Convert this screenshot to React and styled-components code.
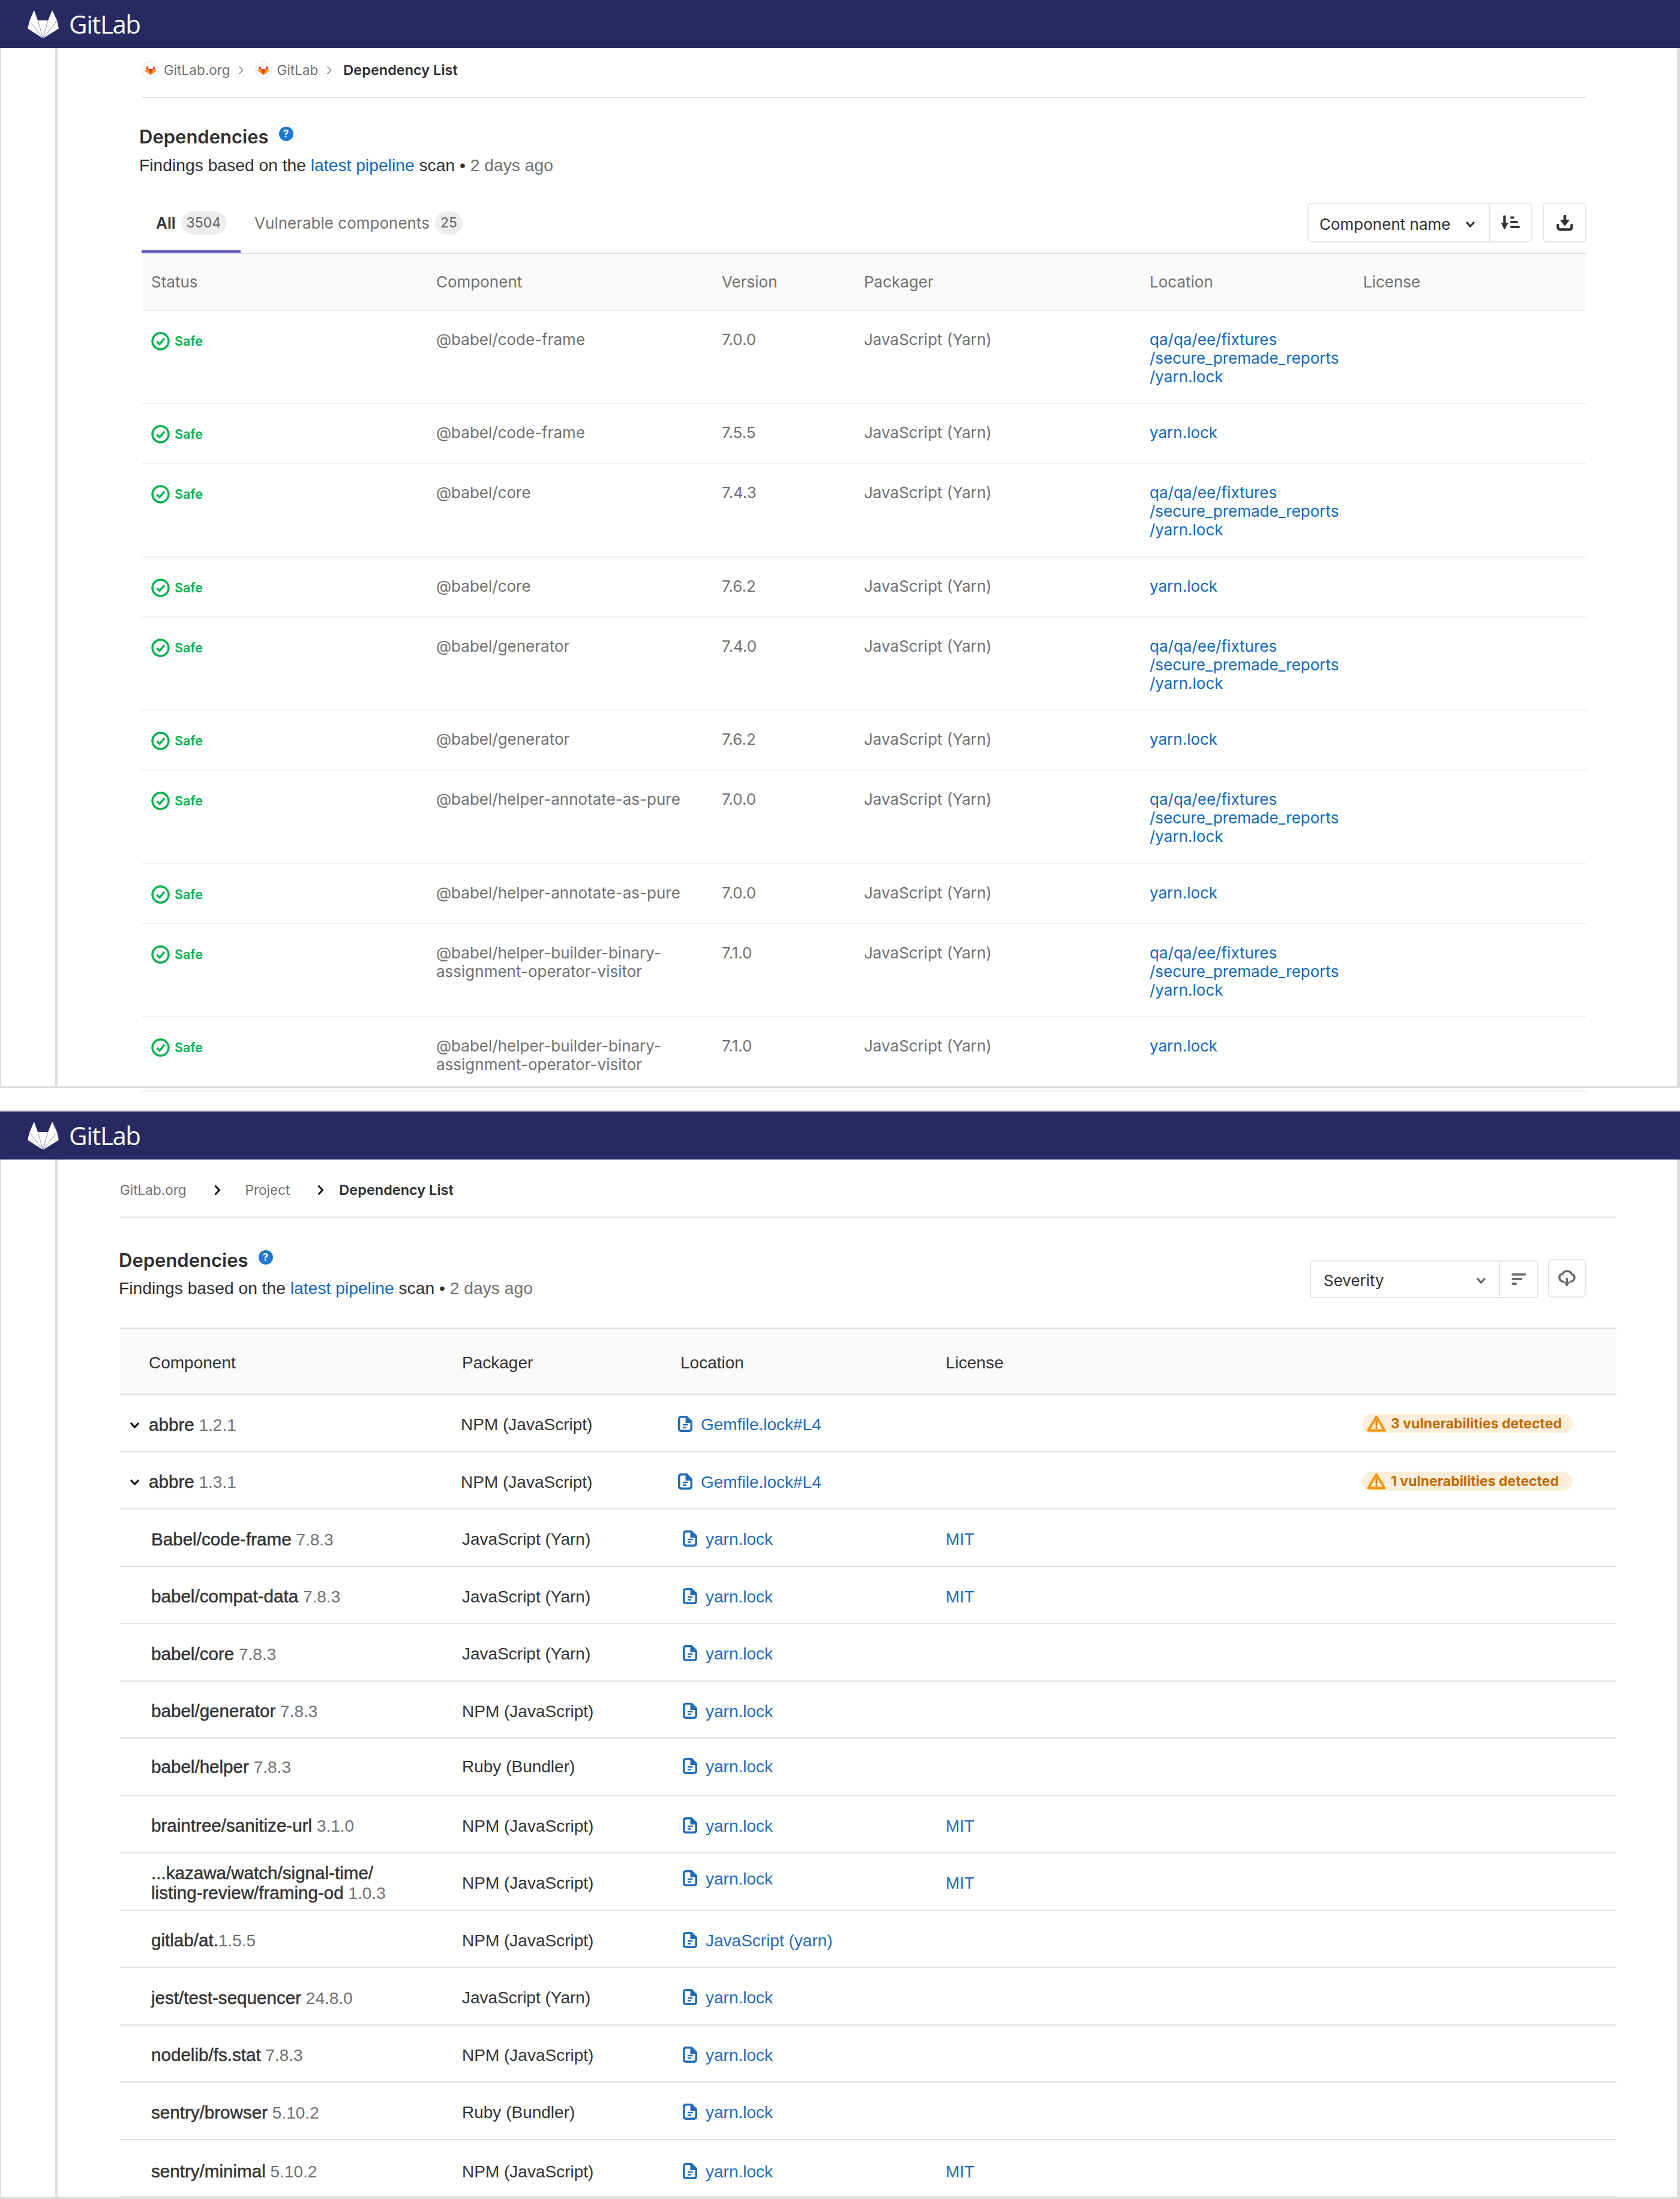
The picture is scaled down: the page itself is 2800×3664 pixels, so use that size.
import React from 'react';
import styled, { createGlobalStyle } from 'styled-components';

const INTER = '"Inter", "Liberation Sans", sans-serif';
const HELV = '"Liberation Sans", Arial, sans-serif';
const LINK = '#1168b8';

const GlobalStyle = createGlobalStyle`
  html, body {
    margin: 0;
    padding: 0;
    background: #fff;
    font-family: ${INTER};
  }
  * { box-sizing: border-box; }
`;

const Page = styled.div`
  width: 2800px;
  height: 3664px;
  overflow: hidden;
  background: #fff;
`;

const Panel = styled.section`
  display: flex;
  flex-direction: column;
  height: ${p => p.$height}px;
  margin-top: ${p => p.$top || 0}px;
  border-top: ${p => (p.$top ? '2px solid #ddd' : 'none')};
`;

const Navbar = styled.header`
  flex: 0 0 80px;
  display: flex;
  align-items: center;
  padding-left: 46px;
  background: #292961;
`;

const Wordmark = styled.span`
  margin-left: 17px;
  font-family: "Open Sans", sans-serif;
  font-size: 42px;
  line-height: 48px;
  letter-spacing: -1.4px;
  color: #fff;
`;

const Body = styled.div`
  flex: 1;
  min-height: 0;
  display: flex;
  border-left: 2px solid #ddd;
  border-right: 5px solid #ddd;
  border-bottom: ${p => p.$bottom}px solid #ddd;
`;

const Sidebar = styled.aside`
  flex: 0 0 94px;
  border-right: 4px solid #ddd;
`;

const Content = styled.main`
  flex: 1;
  min-width: 0;
  padding-left: ${p => p.$left}px;
  padding-right: ${p => p.$right}px;
`;

const Breadcrumbs = styled.nav`
  display: flex;
  align-items: center;
  height: ${p => p.$height}px;
  padding-top: ${p => p.$offset || 0}px;
  padding-bottom: ${p => p.$lift || 0}px;
  border-bottom: 2px solid #e5e5e5;
  font-size: 22.5px;
  color: #707070;
`;

const Avatar = styled.span`
  display: inline-flex;
  align-items: center;
  justify-content: center;
  width: 29px;
  height: 29px;
  margin-right: 8px;
  border: 2px solid #eee;
  border-radius: 50%;
`;

const Crumb = styled.span`
  font-size: ${p => (p.$current ? 23.5 : 22.5)}px;
  font-weight: ${p => (p.$current ? 600 : 400)};
  color: ${p => (p.$current ? '#2e2e2e' : '#707070')};
`;

const CrumbArrow = styled.span`
  display: inline-flex;
  margin: 0 ${p => p.$after}px 0 ${p => p.$before}px;
`;

const Title = styled.h1`
  display: flex;
  align-items: center;
  height: 40px;
  margin: ${p => p.$top}px 0 0 ${p => p.$hang}px;
  font-size: 31px;
  font-weight: 600;
  color: #2e2e2e;
`;

const HelpBadge = styled.span`
  display: inline-flex;
  align-items: center;
  justify-content: center;
  width: 24px;
  height: 24px;
  margin: -8px 0 0 17px;
  border-radius: 50%;
  background: #1f78d1;
  font-size: 17px;
  font-weight: 700;
  color: #fff;
`;

const Subtitle = styled.p`
  margin: ${p => p.$top}px 0 0 ${p => p.$hang}px;
  font-family: ${HELV};
  font-size: 28.25px;
  line-height: 36px;
  color: #2e2e2e;
`;

const SubLink = styled.a`
  color: ${LINK};
`;

const Muted = styled.span`
  color: #707070;
`;

const TabBar = styled.div`
  display: flex;
  justify-content: space-between;
  height: 85px;
  margin-top: 45px;
  border-bottom: 2px solid #ddd;
`;

const Tabs = styled.div`
  display: flex;
  align-items: flex-end;
`;

const Tab = styled.div`
  display: flex;
  align-items: flex-start;
  gap: 9px;
  height: 69px;
  padding: 0 ${p => (p.$active ? 24 : 0)}px 0 ${p => (p.$active ? 24 : 23)}px;
  border-bottom: 4px solid ${p => (p.$active ? '#6056c5' : 'transparent')};
  font-size: 26px;
  line-height: 39px;
  font-weight: ${p => (p.$active ? 600 : 400)};
  color: ${p => (p.$active ? '#2e2e2e' : '#707070')};
`;

const TabCount = styled.span`
  padding: 0 9px;
  border-radius: 20px;
  background: #eee;
  font-size: 23px;
  font-weight: 400;
  color: #5e5e5e;
`;

const Toolbar = styled.div`
  display: flex;
  align-items: flex-start;
  gap: ${p => p.$gap}px;
  margin-top: ${p => p.$top || 0}px;
  margin-right: ${p => p.$right || 0}px;
`;

const SortGroup = styled.div`
  display: flex;
  width: ${p => p.$width}px;
  height: ${p => p.$height}px;
  margin-top: ${p => p.$top || 0}px;
  border: 2px solid #e5e5e5;
  border-radius: 6px;
`;

const SortSelect = styled.div`
  flex: 1;
  display: flex;
  align-items: center;
  justify-content: space-between;
  padding: 4px ${p => p.$pad}px 0 ${p => p.$lead}px;
  border-right: 2px solid #e5e5e5;
  font-size: ${p => p.$size}px;
  color: #2e2e2e;
`;

const SortButton = styled.div`
  flex: 0 0 ${p => p.$width}px;
  display: flex;
  align-items: center;
  justify-content: center;
`;

const IconButton = styled.div`
  display: flex;
  align-items: center;
  justify-content: center;
  width: ${p => p.$width}px;
  height: ${p => p.$height}px;
  border: 2px solid #e5e5e5;
  border-radius: 6px;
`;

const TableHead = styled.div`
  display: grid;
  grid-template-columns: 475px 476px 237px 476px 356px 1fr;
  align-items: center;
  height: 95px;
  padding: 0 0 0 16px;
  background: #fafafa;
  border-bottom: 2px solid #eee;
  font-size: 26px;
  color: #707070;
`;

const SafeRow = styled.div`
  display: grid;
  grid-template-columns: 475px 476px 237px 476px 356px 1fr;
  align-items: start;
  min-height: 100px;
  padding: 32px 0 28.4px 16px;
  border-bottom: 2px solid #f0f0f0;
  font-size: 26px;
  line-height: 31px;
  color: #707070;
`;

const Safe = styled.div`
  display: flex;
  align-items: center;
  gap: 8px;
  margin-top: 3px;
  font-size: 21.5px;
  font-weight: 600;
  color: #05b14c;
`;

const BlueLink = styled.a`
  color: ${LINK};
`;

const ListHead = styled.div`
  display: grid;
  grid-template-columns: 570px 364px 442px 1fr;
  align-items: center;
  height: 112px;
  margin-top: 48px;
  padding-top: 6px;
  background: #fafafa;
  border-top: 2px solid #ddd;
  border-bottom: 2px solid #ddd;
  font-family: ${HELV};
  font-size: 28px;
  color: #333;
`;

const HeadName = styled.span`
  padding-left: 48px;
`;

const HeadRow = styled.div`
  display: flex;
  justify-content: space-between;
  align-items: flex-start;
`;

const ListRow = styled.div`
  display: grid;
  grid-template-columns: 570px 364px 442px 694px 1fr;
  align-items: center;
  height: 95.5px;
  padding-top: ${p => 7 + (p.$shift || 0)}px;
  border-bottom: 2px solid #e2e2e2;
  font-family: ${HELV};
  font-size: 28px;
  line-height: 32px;
  color: #333;
`;

const NameCell = styled.div`
  display: flex;
  align-items: center;
  gap: 15px;
  padding-left: ${p => (p.$parent ? 16 : 52)}px;
`;

const Name = styled.span`
  font-size: 29.6px;
  -webkit-text-stroke: 0.5px #333;
`;

const Version = styled.span`
  color: #707070;
`;

const PackagerCell = styled.div`
  margin-left: ${p => (p.$parent ? -2 : 0)}px;
`;

const LocationCell = styled.div`
  display: flex;
  align-items: center;
  gap: 14px;
  padding-left: ${p => (p.$parent ? 0 : 4)}px;
  padding-bottom: ${p => (p.$raised ? 14 : 0)}px;
  margin-left: ${p => (p.$parent ? -4 : 0)}px;
  color: #1f6bb8;
`;

const FileIcon = styled.svg`
  flex: none;
  margin-bottom: 3px;
`;

const LicenseCell = styled.div`
  color: #1f6bb8;
`;

const VulnBadge = styled.div`
  display: flex;
  align-items: center;
  gap: 8px;
  width: 351px;
  height: 32px;
  margin-bottom: 4px;
  padding-left: 8px;
  border-radius: 16px;
  background: #fdeedc;
  font-family: ${INTER};
  font-size: 23px;
  font-weight: 700;
  white-space: nowrap;
  color: #c26a00;
`;

function Tanuki() {
  return (
    <svg width="52" height="47" viewBox="0 0 52 47" style={{ flex: 'none' }}>
      <path d="M10.7 0 L17 17 H34 L41 0 L49 17 L52 30.6 L25.7 47 L0 30.6 L3.5 17 Z" fill="#fff" />
      <path d="M25.7 47 L3.5 18 M25.7 47 L34 17 M25.7 47 L17 17 M25.7 47 L48.5 18" stroke="#292961" strokeWidth="0.5" fill="none" />
    </svg>
  );
}

function SmallTanuki() {
  return (
    <svg width="18" height="16" viewBox="0 0 18 16">
      <path d="M9 16 L0 9.5 L1 6 H17 L18 9.5 Z" fill="#fc6d26" />
      <path d="M9 16 L5.6 6 H12.4 Z" fill="#e24329" />
      <path d="M1 6 L3.2 0 L5.6 6 Z M17 6 L14.8 0 L12.4 6 Z" fill="#e24329" />
      <path d="M0 9.5 L1 6 H4 L9 16 Z M18 9.5 L17 6 H14 L9 16 Z" fill="#fca326" opacity="0.75" />
    </svg>
  );
}

function ThinChevron() {
  return (
    <svg width="9" height="16" viewBox="0 0 9 16">
      <path d="M1.5 1.5 L7.5 8 L1.5 14.5" fill="none" stroke="#8a8a8a" strokeWidth="1.6" />
    </svg>
  );
}

function BoldChevron() {
  return (
    <svg width="12" height="18" viewBox="0 0 12 18">
      <path d="M2.5 1.5 L9.5 9 L2.5 16.5" fill="none" stroke="#111" strokeWidth="3" />
    </svg>
  );
}

function DownChevron({ color = '#2e2e2e', size = 17 }) {
  return (
    <svg width={size} height="11" viewBox="0 0 17 11" style={{ flex: 'none' }}>
      <path d="M2 2 L8.5 9 L15 2" fill="none" stroke={color} strokeWidth="3.2" />
    </svg>
  );
}

function SortAscIcon() {
  return (
    <svg width="31" height="24" viewBox="0 0 31 24">
      <path d="M5.5 2 V16" stroke="#333" strokeWidth="4.4" strokeLinecap="round" />
      <path d="M1 13 H10.5 L5.5 22.5 Z" fill="#333" stroke="#333" strokeWidth="1.6" strokeLinejoin="round" />
      <path d="M17 3.5 H20 M17 11 H26 M17 19 H29" stroke="#333" strokeWidth="4" strokeLinecap="round" />
    </svg>
  );
}

function SortDescIcon() {
  return (
    <svg width="25" height="21" viewBox="0 0 25 21">
      <path d="M2.5 2.5 H22.5 M2.5 10 H16 M2.5 18 H7" stroke="#6a6a6a" strokeWidth="4.2" strokeLinecap="round" />
    </svg>
  );
}

function DownloadIcon() {
  return (
    <svg width="28" height="27" viewBox="0 0 28 27">
      <path d="M14 2 V13" stroke="#333" strokeWidth="4.6" strokeLinecap="round" />
      <path d="M7.5 9 H20.5 L14 17.5 Z" fill="#333" stroke="#333" strokeWidth="1.8" strokeLinejoin="round" />
      <path d="M2.5 17 V21 A3.5 3.5 0 0 0 6 24.5 H22 A3.5 3.5 0 0 0 25.5 21 V17" fill="none" stroke="#333" strokeWidth="4.4" strokeLinecap="round" />
    </svg>
  );
}

function CloudIcon() {
  return (
    <svg width="29" height="29" viewBox="0 0 29 29">
      <path d="M9 19.5 C4.5 19.5 2 16 2 12.5 C2 9.5 4 7.2 7 6.8 C8.5 3.6 11 2 14.5 2 C18.5 2 21.5 4 22.5 7 C25 7.5 27 9.8 27 13 C27 16.5 24.5 19.5 20 19.5" fill="none" stroke="#6a6a6a" strokeWidth="3.6" strokeLinecap="round" />
      <path d="M14.5 13 V22" stroke="#6a6a6a" strokeWidth="3.6" />
      <path d="M9.5 20.5 H19.5 L14.5 28 Z" fill="#6a6a6a" />
    </svg>
  );
}

function SafeIcon() {
  return (
    <svg width="31" height="31" viewBox="0 0 31 31" style={{ flex: 'none' }}>
      <circle cx="15.5" cy="15.5" r="13.5" fill="none" stroke="#05b14c" strokeWidth="3.4" />
      <path d="M9.5 16 L14 20.5 L22 11" fill="none" stroke="#05b14c" strokeWidth="3.4" />
    </svg>
  );
}

function DocIcon() {
  return (
    <FileIcon width="24" height="27" viewBox="0 0 24 27">
      <path d="M5 0 H15 L24 9 V22 A5 5 0 0 1 19 27 H5 A5 5 0 0 1 0 22 V5 A5 5 0 0 1 5 0 Z" fill="#1f6bb8" />
      <path d="M5.5 3.5 H12.5 V12 H20.5 V21.5 A2 2 0 0 1 18.5 23.5 H5.5 A2 2 0 0 1 3.5 21.5 V5.5 A2 2 0 0 1 5.5 3.5 Z" fill="#fff" />
      <path d="M8 15 H16.5 M8 19.5 H14" stroke="#1f6bb8" strokeWidth="2.4" />
    </FileIcon>
  );
}

function WarnIcon() {
  return (
    <svg width="32" height="28" viewBox="0 0 32 28" style={{ flex: 'none' }}>
      <path d="M16 2.5 L29.5 25.5 H2.5 Z" fill="none" stroke="#fc9403" strokeWidth="4" strokeLinejoin="round" />
      <path d="M16 9.5 V17" stroke="#d27d10" strokeWidth="3" strokeLinecap="round" />
      <circle cx="16" cy="21.3" r="1.8" fill="#d27d10" />
    </svg>
  );
}

const LONG_PATH = ['qa/qa/ee/fixtures', '/secure_premade_reports', '/yarn.lock'];

const SAFE_ROWS = [
  { name: ['@babel/code-frame'], version: '7.0.0', location: LONG_PATH },
  { name: ['@babel/code-frame'], version: '7.5.5', location: ['yarn.lock'] },
  { name: ['@babel/core'], version: '7.4.3', location: LONG_PATH },
  { name: ['@babel/core'], version: '7.6.2', location: ['yarn.lock'] },
  { name: ['@babel/generator'], version: '7.4.0', location: LONG_PATH },
  { name: ['@babel/generator'], version: '7.6.2', location: ['yarn.lock'] },
  { name: ['@babel/helper-annotate-as-pure'], version: '7.0.0', location: LONG_PATH },
  { name: ['@babel/helper-annotate-as-pure'], version: '7.0.0', location: ['yarn.lock'] },
  { name: ['@babel/helper-builder-binary-', 'assignment-operator-visitor'], version: '7.1.0', location: LONG_PATH },
  { name: ['@babel/helper-builder-binary-', 'assignment-operator-visitor'], version: '7.1.0', location: ['yarn.lock'] }
];

const LIST_ROWS = [
  { name: 'abbre', version: '1.2.1', packager: 'NPM (JavaScript)', file: 'Gemfile.lock#L4', count: 3, parent: true },
  { name: 'abbre', version: '1.3.1', packager: 'NPM (JavaScript)', file: 'Gemfile.lock#L4', count: 1, parent: true },
  { name: 'Babel/code-frame', version: '7.8.3', packager: 'JavaScript (Yarn)', file: 'yarn.lock', license: 'MIT' },
  { name: 'babel/compat-data', version: '7.8.3', packager: 'JavaScript (Yarn)', file: 'yarn.lock', license: 'MIT' },
  { name: 'babel/core', version: '7.8.3', packager: 'JavaScript (Yarn)', file: 'yarn.lock' },
  { name: 'babel/generator', version: '7.8.3', packager: 'NPM (JavaScript)', file: 'yarn.lock' },
  { name: 'babel/helper', version: '7.8.3', packager: 'Ruby (Bundler)', file: 'yarn.lock', shift: -6 },
  { name: 'braintree/sanitize-url', version: '3.1.0', packager: 'NPM (JavaScript)', file: 'yarn.lock', license: 'MIT' },
  { name: '...kazawa/watch/signal-time/', second: 'listing-review/framing-od', version: '1.0.3', packager: 'NPM (JavaScript)', file: 'yarn.lock', license: 'MIT', raised: true },
  { name: 'gitlab/at.', version: '1.5.5', packager: 'NPM (JavaScript)', file: 'JavaScript (yarn)', tight: true },
  { name: 'jest/test-sequencer', version: '24.8.0', packager: 'JavaScript (Yarn)', file: 'yarn.lock' },
  { name: 'nodelib/fs.stat', version: '7.8.3', packager: 'NPM (JavaScript)', file: 'yarn.lock' },
  { name: 'sentry/browser', version: '5.10.2', packager: 'Ruby (Bundler)', file: 'yarn.lock' },
  { name: 'sentry/minimal', version: '5.10.2', packager: 'NPM (JavaScript)', file: 'yarn.lock', license: 'MIT', shift: 6 }
];

function Findings({ top, hang }) {
  return (
    <Subtitle $top={top} $hang={hang}>
      Findings based on the <SubLink>latest pipeline</SubLink> scan • <Muted>2 days ago</Muted>
    </Subtitle>
  );
}

function SafeTable() {
  return (
    <>
      <TableHead>
        <span>Status</span>
        <span>Component</span>
        <span>Version</span>
        <span>Packager</span>
        <span>Location</span>
        <span>License</span>
      </TableHead>
      {SAFE_ROWS.map((row, index) => (
        <SafeRow key={index}>
          <Safe><SafeIcon />Safe</Safe>
          <div>{row.name.map(line => <div key={line}>{line}</div>)}</div>
          <div>{row.version}</div>
          <div>JavaScript (Yarn)</div>
          <div>{row.location.map(line => <div key={line}><BlueLink>{line}</BlueLink></div>)}</div>
        </SafeRow>
      ))}
    </>
  );
}

function DependencyList() {
  return (
    <>
      <ListHead>
        <HeadName>Component</HeadName>
        <span>Packager</span>
        <span>Location</span>
        <span>License</span>
      </ListHead>
      {LIST_ROWS.map((row, index) => (
        <ListRow key={index} $shift={row.shift}>
          <NameCell $parent={row.parent}>
            {row.parent && <DownChevron color="#111" />}
            <span>
              <Name>{row.name}</Name>
              {row.second && <><br /><Name>{row.second}</Name></>}
              {row.tight ? '' : ' '}
              <Version>{row.version}</Version>
            </span>
          </NameCell>
          <PackagerCell $parent={row.parent}>{row.packager}</PackagerCell>
          <LocationCell $parent={row.parent} $raised={row.raised}>
            <DocIcon />
            {row.file}
          </LocationCell>
          <LicenseCell>{row.license}</LicenseCell>
          {row.count && <VulnBadge><WarnIcon />{row.count} vulnerabilities detected</VulnBadge>}
        </ListRow>
      ))}
    </>
  );
}

export default function App() {
  return (
    <Page>
      <GlobalStyle />
      <Panel $height={1813}>
        <Navbar><Tanuki /><Wordmark>GitLab</Wordmark></Navbar>
        <Body $bottom={3}>
          <Sidebar />
          <Content $left={140} $right={151}>
            <Breadcrumbs $height={83} $lift={8}>
              <Avatar><SmallTanuki /></Avatar>
              <Crumb>GitLab.org</Crumb>
              <CrumbArrow $before={13} $after={19}><ThinChevron /></CrumbArrow>
              <Avatar><SmallTanuki /></Avatar>
              <Crumb>GitLab</Crumb>
              <CrumbArrow $before={14} $after={19}><ThinChevron /></CrumbArrow>
              <Crumb $current>Dependency List</Crumb>
            </Breadcrumbs>
            <Title $top={44} $hang={-4}>Dependencies<HelpBadge>?</HelpBadge></Title>
            <Findings top={10} hang={-4} />
            <TabBar>
              <Tabs>
                <Tab $active>All<TabCount>3504</TabCount></Tab>
                <Tab>Vulnerable components<TabCount>25</TabCount></Tab>
              </Tabs>
              <Toolbar $gap={17}>
                <SortGroup $width={375} $height={66}>
                  <SortSelect $pad={22} $lead={18} $size={26}>
                    Component name
                    <DownChevron />
                  </SortSelect>
                  <SortButton $width={69}><SortAscIcon /></SortButton>
                </SortGroup>
                <IconButton $width={73} $height={66}><DownloadIcon /></IconButton>
              </Toolbar>
            </TabBar>
            <SafeTable />
          </Content>
        </Body>
      </Panel>
      <Panel $height={1814} $top={37}>
        <Navbar><Tanuki /><Wordmark>GitLab</Wordmark></Navbar>
        <Body $bottom={4}>
          <Sidebar />
          <Content $left={104} $right={101}>
            <Breadcrumbs $height={97} $offset={6}>
              <Crumb>GitLab.org</Crumb>
              <CrumbArrow $before={45} $after={41}><BoldChevron /></CrumbArrow>
              <Crumb>Project</Crumb>
              <CrumbArrow $before={45} $after={25}><BoldChevron /></CrumbArrow>
              <Crumb $current>Dependency List</Crumb>
            </Breadcrumbs>
            <HeadRow>
              <div>
                <Title $top={50} $hang={-2}>Dependencies<HelpBadge>?</HelpBadge></Title>
                <Findings top={9} hang={-2} />
              </div>
              <Toolbar $gap={16} $top={69} $right={51}>
                <SortGroup $width={381} $height={63} $top={2}>
                  <SortSelect $pad={21} $lead={21} $size={26}>
                    <span>Severity</span>
                    <DownChevron color="#666" />
                  </SortSelect>
                  <SortButton $width={62}><SortDescIcon /></SortButton>
                </SortGroup>
                <IconButton $width={63} $height={64}><CloudIcon /></IconButton>
              </Toolbar>
            </HeadRow>
            <DependencyList />
          </Content>
        </Body>
      </Panel>
    </Page>
  );
}
